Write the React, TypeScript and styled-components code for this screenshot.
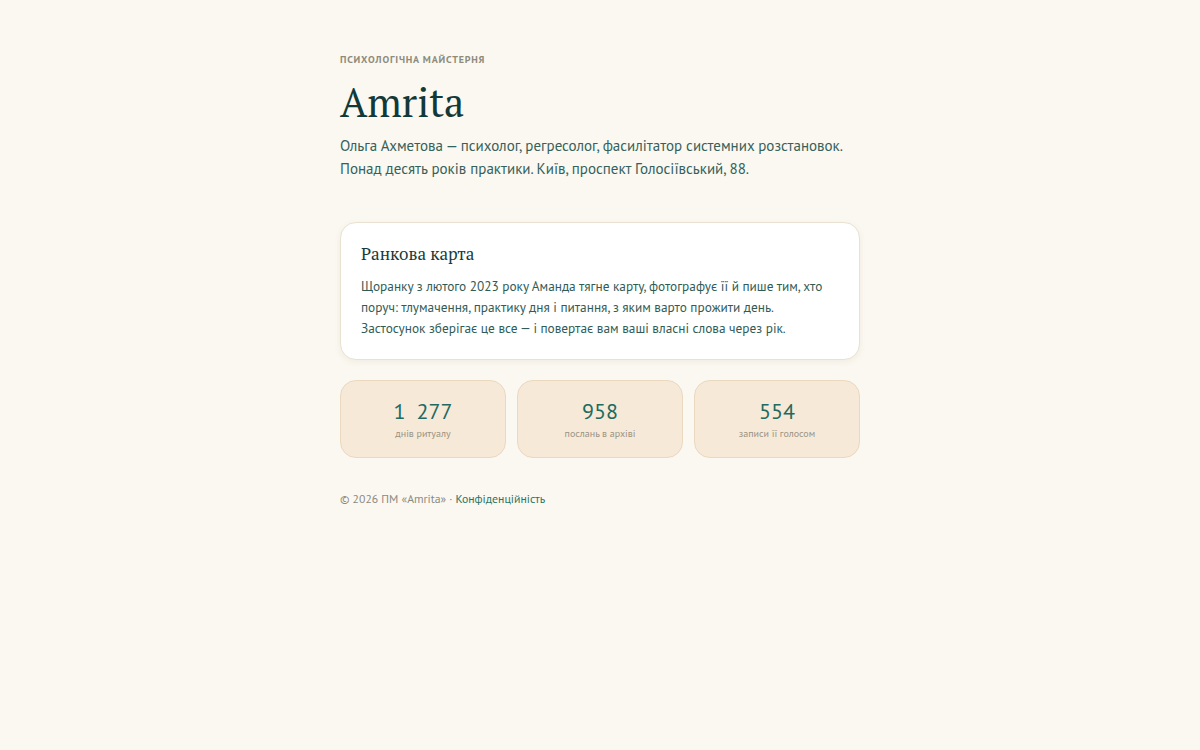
import React from 'react';
import styled, { createGlobalStyle } from 'styled-components';

const sans = `"PT Sans", Roboto, "Noto Sans", sans-serif`;
const serif = `"PT Serif", "Liberation Serif", serif`;

const GlobalStyle = createGlobalStyle`
  html, body {
    margin: 0;
    padding: 0;
    background: #fbf8f1;
  }
  body {
    font-family: ${sans};
    color: #2f5a55;
  }
`;

const Page = styled.main`
  min-height: 750px;
  display: flex;
  justify-content: center;
  padding-top: 54px;
  box-sizing: border-box;
`;

const Column = styled.div`
  width: 520px;
  display: flex;
  flex-direction: column;
`;

const Eyebrow = styled.div`
  font-size: 10px;
  font-weight: 700;
  letter-spacing: 0.8px;
  text-transform: uppercase;
  color: #8d8b7c;
  line-height: 12px;
`;

const Title = styled.h1`
  margin: 12px 0 0;
  font-family: ${serif};
  font-weight: 400;
  font-size: 40px;
  line-height: 48px;
  color: #11393a;
`;

const Lead = styled.p`
  margin: 8px 0 0;
  font-size: 15px;
  line-height: 23px;
  color: #35615b;
`;

const Card = styled.section`
  margin-top: 42px;
  background: #ffffff;
  border: 1px solid #e9e2d2;
  border-radius: 16px;
  box-shadow: 0 2px 6px rgba(120, 100, 60, 0.08);
  padding: 19px 20px 20px;
`;

const CardTitle = styled.h2`
  margin: 0;
  font-family: ${serif};
  font-weight: 400;
  font-size: 17px;
  line-height: 24px;
  color: #163c3c;
`;

const CardText = styled.p`
  margin: 10px 0 0;
  font-size: 13.3px;
  line-height: 21px;
  color: #315c56;
`;

const Stats = styled.div`
  margin-top: 20px;
  display: grid;
  grid-template-columns: repeat(3, 1fr);
  gap: 11px;
`;

const Stat = styled.div`
  height: 78px;
  box-sizing: border-box;
  background: #f6e9d8;
  border: 1px solid #ead9bf;
  border-radius: 16px;
  display: flex;
  flex-direction: column;
  align-items: center;
  justify-content: center;
  gap: 3px;
`;

const StatValue = styled.div`
  font-size: 22px;
  line-height: 26px;
  color: #226a5e;
  white-space: pre;
`;

const StatLabel = styled.div`
  font-size: 10px;
  line-height: 13px;
  color: #9a9282;
`;

const Footer = styled.footer`
  margin-top: 33px;
  font-size: 11.75px;
  line-height: 16px;
  color: #8c8a80;
`;

const FooterLink = styled.a`
  color: #2a7465;
  text-decoration: none;
`;

const stats = [
  { value: '1\u2002277', label: 'днів ритуалу' },
  { value: '958', label: 'послань в архіві' },
  { value: '554', label: 'записи її голосом' },
];

export default function App() {
  return (
    <>
      <GlobalStyle />
      <Page>
        <Column>
          <Eyebrow>Психологічна майстерня</Eyebrow>
          <Title>Amrita</Title>
          <Lead>
            Ольга Ахметова — психолог, регресолог, фасилітатор системних розстановок.
            <br />
            Понад десять років практики. Київ, проспект Голосіївський, 88.
          </Lead>
          <Card>
            <CardTitle>Ранкова карта</CardTitle>
            <CardText>
              Щоранку з лютого 2023 року Аманда тягне карту, фотографує її й пише тим, хто
              поруч: тлумачення, практику дня і питання, з яким варто прожити день.
              Застосунок зберігає це все — і повертає вам ваші власні слова через рік.
            </CardText>
          </Card>
          <Stats>
            {stats.map((s) => (
              <Stat key={s.label}>
                <StatValue>{s.value}</StatValue>
                <StatLabel>{s.label}</StatLabel>
              </Stat>
            ))}
          </Stats>
          <Footer>
            © 2026 ПМ «Amrita» · <FooterLink href="#">Конфіденційність</FooterLink>
          </Footer>
        </Column>
      </Page>
    </>
  );
}
